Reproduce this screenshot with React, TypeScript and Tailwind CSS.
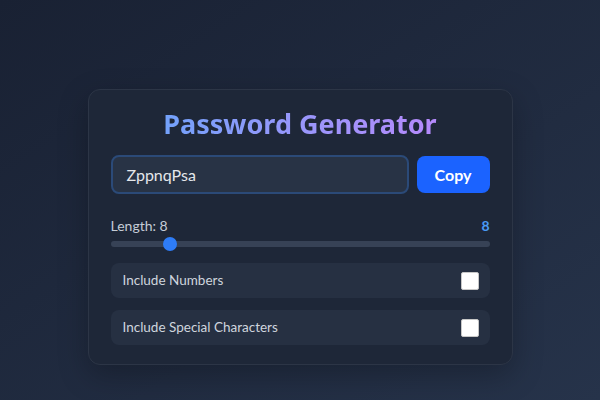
import { useState } from "react";

function Toggle({ label }: { label: string }) {
  const [on, setOn] = useState(false);
  return (
    <label className="flex h-[35px] cursor-pointer items-center justify-between rounded-lg bg-[#263042] pl-[12px] pr-[11px] text-[13.5px] text-[#cfd5de]">
      <span>{label}</span>
      <input
        type="checkbox"
        checked={on}
        onChange={() => setOn(!on)}
        className="h-[18px] w-[18px] appearance-none rounded-[2px] border border-[#c7c7c7] bg-white"
      />
    </label>
  );
}

export default function App() {
  const [length] = useState(8);
  const min = 6;
  const max = 20;
  const pct = (length - min) / (max - min);

  return (
    <div
      className="flex h-[400px] w-[600px] justify-center bg-gradient-to-br from-[#192133] to-[#26334a] pt-[89px]"
      style={{ fontFamily: 'Lato, "Noto Sans", sans-serif' }}
    >
      <div className="h-fit w-[425px] rounded-xl border border-[#2c3546] bg-[#1e2738] px-[22px] pb-[19px] pt-[14px] shadow-[0_10px_30px_rgba(0,0,0,0.25)]">
        <h1 className="bg-gradient-to-r from-[#60a5fa] to-[#c084fc] bg-clip-text text-center font-['Noto_Sans',sans-serif] text-[27px] font-bold leading-[40px] text-transparent">
          Password Generator
        </h1>

        <div className="mt-[11px] flex gap-2">
          <div className="flex h-[39px] flex-1 items-center rounded-lg border-2 border-[#2b4a78] bg-[#283345] pl-[14px] text-[16px] text-[#e5e7eb]">
            ZppnqPsa
          </div>
          <button
            type="button"
            className="h-[37px] w-[73px] self-center rounded-lg bg-[#1b63ff] text-[16px] font-bold text-white"
          >
            Copy
          </button>
        </div>

        <div className="mt-[22px] flex items-center justify-between text-[14px] leading-5">
          <span className="text-[#c5ccd6]">Length: {length}</span>
          <span className="font-bold text-[#4a9af5]">{length}</span>
        </div>

        <div className="relative mt-[1px] h-[14px]">
          <div className="absolute left-0 right-0 top-[4px] h-[6px] rounded-full bg-[#374256]" />
          <div
            className="absolute top-0 h-[14px] w-[14px] rounded-full bg-[#2e7cf6]"
            style={{ left: `calc(${pct} * (100% - 14px))` }}
          />
        </div>

        <div className="mt-[12px] flex flex-col gap-[12px]">
          <Toggle label="Include Numbers" />
          <Toggle label="Include Special Characters" />
        </div>
      </div>
    </div>
  );
}
